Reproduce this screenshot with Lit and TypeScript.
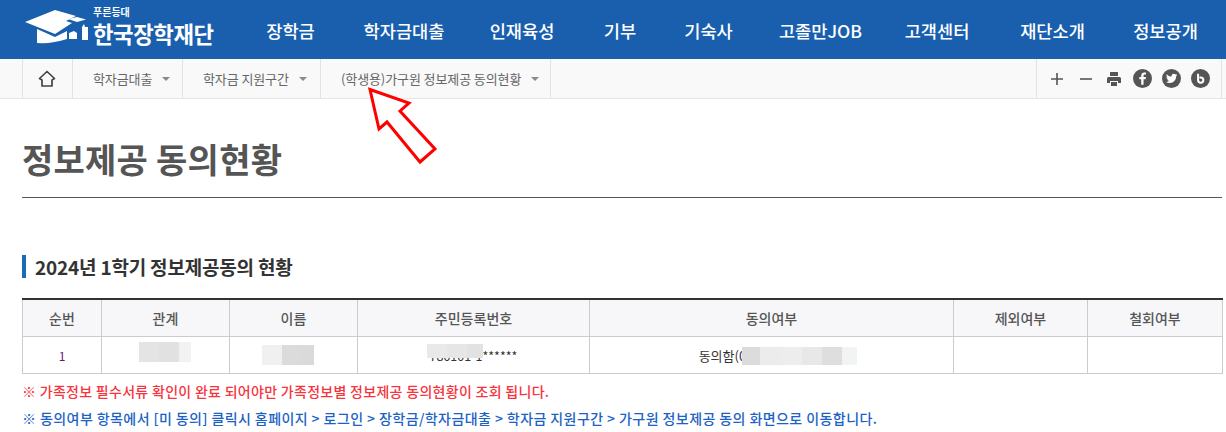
import { LitElement, html, css } from "lit";
import { customElement } from "lit/decorators.js";

const NAV = [
  ["장학금", 290.5], ["학자금대출", 404], ["인재육성", 522], ["기부", 620], ["기숙사", 708.5],
  ["고졸만JOB", 820.5], ["고객센터", 937], ["재단소개", 1052.5], ["정보공개", 1165.5],
] as const;

@customElement("app-root")
export class AppRoot extends LitElement {
  static styles = css`
    :host { display: block; position: relative; width: 1226px; height: 432px; overflow: hidden; background: #fff;
      font-family: "Noto Sans CJK KR", "Noto Sans", sans-serif; color: #333; }
    .top { height: 59px; background: #1a5fae; position: relative; }
    .logo { position: absolute; left: 0; top: 0; width: 240px; height: 59px; }
    .logo svg { position: absolute; left: 0; top: 0; }
    .sub-logo { position: absolute; left: 93px; top: 5px; font-size: 10px; line-height: 14px; font-weight: 700; color: #fff; }
    .main-logo { position: absolute; left: 93px; top: 19px; font-size: 22.3px; line-height: 28px; font-weight: 700; color: #fff; letter-spacing: -0.4px; white-space: nowrap; }
    .nav a { position: absolute; top: 18px; line-height: 26px; transform: translateX(-50%); color: #fff; font-size: 17.6px; font-weight: 500; white-space: nowrap; }
    .bar { height: 40px; box-sizing: border-box; background: #f9f9f9; border-bottom: 1px solid #e6e6e6; display: flex; padding-left: 22px; }
    .cell { border-left: 1px solid #e3e3e3; display: flex; align-items: center; box-sizing: border-box; font-size: 13px; color: #666; white-space: nowrap; letter-spacing: -0.1px; }
    .home { width: 50px; justify-content: center; padding-right: 2px; }
    .crumb1 { width: 110px; padding-left: 20px; }
    .crumb2 { width: 138px; padding-left: 20px; }
    .crumb3 { width: 231px; padding-left: 20px; border-right: 1px solid #e3e3e3; }
    .caret { width: 0; height: 0; border: 4px solid transparent; border-top: 4px solid #8a8a8a; border-bottom: 0; margin-left: 10px; }
    .tools { margin-left: auto; margin-right: 4px; width: 186px; padding-left: 13px; border-right: 1px solid #e3e3e3; }
    .t-minus { margin-left: 15px; }
    .t-print { margin-left: 13px; }
    .t-f { margin-left: 11px; }
    .t-c { margin-left: 10px; }
    .title { margin: 0 4px 0 22px; height: 99px; box-sizing: border-box; border-bottom: 1px solid #555; padding-top: 35px; font-size: 34px; line-height: 50px; font-weight: 700; color: #555; letter-spacing: 0.25px; }
    h2 { margin: 57px 22px 0; height: 23px; border-left: 4px solid #1a6db5; padding-left: 9px; font-size: 19px; line-height: 23px; font-weight: 700; color: #333; letter-spacing: -0.2px; }
    table { margin: 20px 0 0 22px; width: 1200px; border-collapse: collapse; table-layout: fixed; border-top: 2px solid #333; font-size: 13px; }
    th, td { border: 1px solid #ccc; text-align: center; padding: 0; position: relative; }
    th { height: 36px; background: #f7f7f9; font-weight: 500; color: #555; font-size: 14px; }
    td { height: 36px; color: #333; }
    .num { color: #6b1a6b; font-size: 12px; }
    .rrn { font-size: 12.5px; }
    .blur { position: absolute; display: flex; height: 20px; }
    .blur i { display: block; height: 100%; }
    .b1 { left: 37px; top: 5px; }
    .b2 { left: 32px; top: 8px; }
    .b3 { left: 69px; top: 7px; height: 14px; }
    .b4 { left: 152px; top: 10px; height: 18px; }
    .note { margin: 0 0 0 22px; font-size: 14px; font-weight: 500; line-height: 18px; white-space: nowrap; }
    .red { color: #f8333c; margin-top: 8px; letter-spacing: 0.29px; }
    .blue { color: #1b62c4; margin-top: 9px; letter-spacing: 0.42px; }
    .arrow { position: absolute; left: 360px; top: 80px; }
  `;

  private blur(cls: string, parts: [number, string][]) {
    return html`<span class="blur ${cls}">${parts.map(([w, c]) => html`<i style="width:${w}px;background:${c}"></i>`)}</span>`;
  }

  render() {
    return html`
      <div class="top">
        <div class="logo">
          <svg width="100" height="59" viewBox="0 0 100 59">
            <path d="M25 22 L55 10 L76 16 L66 21 L72 23 L55 34 Z" fill="#fff"/>
            <path d="M37 29 L55 37 L67 31 V39 Q52 44 37 43 Z" fill="#fff"/>
            <path d="M69 33 L74 31 L77 33 V39 H69 Z" fill="#fff"/>
            <path d="M82 27 L84 24 L85 27 H88 V40 H82 Z" fill="#fff"/>
            <path d="M68 19 L77 17 L86 19.5 L77 22 Z" fill="#fff"/>
          </svg>
          <span class="sub-logo">푸른등대</span>
          <span class="main-logo">한국장학재단</span>
        </div>
        <div class="nav">${NAV.map(([t, x]) => html`<a style="left:${x}px">${t}</a>`)}</div>
      </div>
      <div class="bar">
        <div class="cell home">
          <svg width="18" height="18" viewBox="0 0 18 18" fill="none" stroke="#444" stroke-width="1.7" stroke-linejoin="round">
            <path d="M9 1.5 L16.5 8.5 L14 10 V16 H4 V10 L1.5 8.5 Z"/>
          </svg>
        </div>
        <div class="cell crumb1">학자금대출<span class="caret"></span></div>
        <div class="cell crumb2">학자금 지원구간<span class="caret"></span></div>
        <div class="cell crumb3">(학생용)가구원 정보제공 동의현황<span class="caret"></span></div>
        <div class="cell tools">
          <svg width="14" height="14" viewBox="0 0 14 14" stroke="#555" stroke-width="1.6"><path d="M1 7H13M7 1V13"/></svg>
          <svg class="t-minus" width="14" height="14" viewBox="0 0 14 14" stroke="#555" stroke-width="1.6"><path d="M1 7H13"/></svg>
          <svg class="t-print" width="16" height="16" viewBox="0 0 16 16" fill="#555"><path d="M4 1H12V5H4Z M2.5 6H13.5Q15 6 15 7.5V12H12V10H4V12H1V7.5Q1 6 2.5 6Z M5 11H11V15H5Z"/></svg>
          <svg class="t-f" width="19" height="19" viewBox="0 0 18 18"><circle cx="9" cy="9" r="9" fill="#555"/><path d="M10 15V9.7H12L12.3 7.5H10V6.3C10 5.6 10.3 5.2 11 5.2H12.3V3.3C11.9 3.2 11.3 3.2 10.7 3.2C9 3.2 7.8 4.2 7.8 6V7.5H6V9.7H7.8V15Z" fill="#fff"/></svg>
          <svg class="t-c" width="19" height="19" viewBox="0 0 18 18"><circle cx="9" cy="9" r="9" fill="#555"/><path d="M14.5 5.6C14.1 5.8 13.7 5.9 13.2 6C13.7 5.7 14 5.3 14.2 4.7C13.8 5 13.3 5.1 12.8 5.2C12.4 4.8 11.8 4.5 11.2 4.5C10 4.5 9 5.5 9 6.7C9 6.9 9 7 9.1 7.2C7.3 7.1 5.6 6.2 4.5 4.9C4.3 5.2 4.2 5.6 4.2 6C4.2 6.8 4.6 7.4 5.2 7.8C4.8 7.8 4.5 7.7 4.2 7.5C4.2 8.6 5 9.5 6 9.7C5.7 9.8 5.3 9.8 5 9.7C5.3 10.6 6.1 11.2 7.1 11.2C6.1 12 5 12.3 3.8 12.2C4.8 12.9 6 13.2 7.2 13.2C11.2 13.2 13.5 9.8 13.4 6.8C13.8 6.4 14.2 6 14.5 5.6Z" fill="#fff"/></svg>
          <svg class="t-c" width="19" height="19" viewBox="0 0 18 18"><circle cx="9" cy="9" r="9" fill="#555"/><path d="M6.7 4.5V10.5A2.5 2.5 0 1 0 9.2 8H8" fill="none" stroke="#fff" stroke-width="1.9"/></svg>
        </div>
      </div>
      <div class="title">정보제공 동의현황</div>
      <h2>2024년 1학기 정보제공동의 현황</h2>
      <table>
        <colgroup>
          <col style="width:79px"/><col style="width:128px"/><col style="width:128px"/><col style="width:232px"/>
          <col style="width:364px"/><col style="width:134px"/><col style="width:135px"/>
        </colgroup>
        <tr><th>순번</th><th>관계</th><th>이름</th><th>주민등록번호</th><th>동의여부</th><th>제외여부</th><th>철회여부</th></tr>
        <tr>
          <td class="num">1</td>
          <td>${this.blur("b1", [[20, "#e4e4e4"], [20, "#e2e1e1"], [12, "#f1f2f2"]])}</td>
          <td>${this.blur("b2", [[20, "#f0f0f0"], [20, "#dcdbdb"], [12, "#dbdada"]])}</td>
          <td class="rrn">
            <span>780101-1******</span>
            ${this.blur("b3", [[20, "#e9e9e9"], [20, "#e6e6e6"], [16, "#e2e2e2"]])}
          </td>
          <td>
            <span>동의함(00000000000000)</span>
            ${this.blur("b4", [[18, "#dcdcdc"], [22, "#ececec"], [20, "#ededed"], [20, "#e8e8e8"], [20, "#dedede"], [15, "#f2f3f3"]])}
          </td>
          <td></td><td></td>
        </tr>
      </table>
      <p class="note red">※ 가족정보 필수서류 확인이 완료 되어야만 가족정보별 정보제공 동의현황이 조회 됩니다.</p>
      <p class="note blue">※ 동의여부 항목에서 [미 동의] 클릭시 홈페이지 &gt; 로그인 &gt; 장학금/학자금대출 &gt; 학자금 지원구간 &gt; 가구원 정보제공 동의 화면으로 이동합니다.</p>
      <svg class="arrow" width="90" height="90" viewBox="360 80 90 90">
        <path d="M370 89.5 L409 103 L400 111 L435 149 L420 162 L387 122 L379 129 Z" fill="#fff" stroke="#f00" stroke-width="3"/>
      </svg>
    `;
  }
}
